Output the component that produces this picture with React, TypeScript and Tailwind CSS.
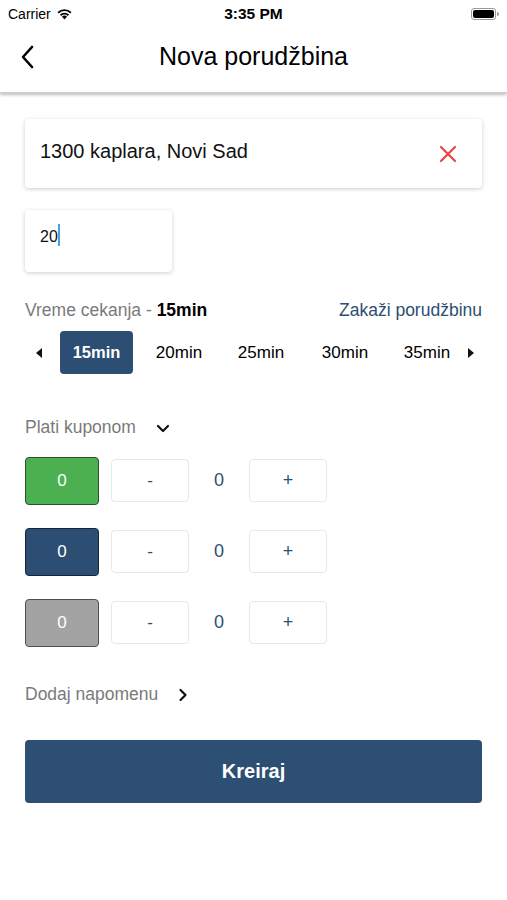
import React from "react";

const font = { fontFamily: '"Helvetica Neue", "Liberation Sans", Arial, sans-serif' };

function CouponRow({ color }: { color: string }) {
  return (
    <div className="flex items-center h-[48px]">
      <div className={`w-[74px] h-[48px] rounded-[4px] border flex items-center justify-center text-white text-[17px] ${color}`}>0</div>
      <div className="ml-[12px] w-[78px] h-[43px] rounded-[4px] border border-[#e8e8e8] bg-white flex items-center justify-center text-[#2c4e72] text-[17px]">-</div>
      <div className="w-[60px] text-center text-[#2c4e72] text-[18px]">0</div>
      <div className="w-[78px] h-[43px] rounded-[4px] border border-[#e8e8e8] bg-white flex items-center justify-center text-[#2c4e72] text-[18px]">+</div>
    </div>
  );
}

export default function App() {
  return (
    <div className="w-[507px] h-[900px] bg-white relative overflow-hidden" style={font}>
      {/* status bar */}
      <div className="h-[28px] flex items-center justify-between px-[8px] text-black">
        <div className="flex items-center gap-[5px] text-[14px]">
          <span>Carrier</span>
          <svg width="17" height="12" viewBox="0 0 17 12">
            <path d="M8.5 11.5 L5.9 8.6 A3.8 3.8 0 0 1 11.1 8.6 Z" fill="#000" />
            <path d="M3.9 6.5 A6.6 6.6 0 0 1 13.1 6.5 L11.8 7.9 A4.7 4.7 0 0 0 5.2 7.9 Z" fill="#000" />
            <path d="M1.5 4 A10 10 0 0 1 15.5 4 L14.2 5.4 A8 8 0 0 0 2.8 5.4 Z" fill="#000" />
          </svg>
        </div>
        <div className="absolute left-0 right-0 text-center text-[15.5px] font-semibold pointer-events-none">3:35 PM</div>
        <div className="flex items-center">
          <div className="w-[25px] h-[12px] rounded-[3px] border border-[#999] p-[1px]">
            <div className="w-full h-full bg-black rounded-[2px]" />
          </div>
          <div className="w-[2px] h-[4px] bg-[#999] rounded-r-sm ml-[1px]" />
        </div>
      </div>

      {/* header */}
      <div className="h-[65px] relative flex items-center justify-center shadow-[0_2px_3px_rgba(0,0,0,0.25)] border-b border-[#cfcfcf]">
        <svg className="absolute left-[19px] top-[16px]" width="16" height="26" viewBox="0 0 16 26">
          <path d="M13 3 L4 13 L13 23" stroke="#000" strokeWidth="2.6" fill="none" strokeLinecap="round" strokeLinejoin="round" />
        </svg>
        <div className="text-[25px] text-black mt-[-7px]">Nova porudžbina</div>
      </div>

      {/* content */}
      <div className="px-[25px] pt-[26px]">
        <div className="h-[69px] rounded-[4px] bg-white shadow-[0_1px_4px_rgba(0,0,0,0.2)] flex items-start justify-between pl-[15px] pr-[25px] pt-[17px]">
          <span className="text-[20px] text-[#111]">1300 kaplara, Novi Sad</span>
          <svg className="mt-[9px]" width="18" height="18" viewBox="0 0 18 18">
            <path d="M2 2 L16 16 M16 2 L2 16" stroke="#e8473c" strokeWidth="2.2" strokeLinecap="round" />
          </svg>
        </div>

        <div className="mt-[22px] w-[147px] h-[62px] rounded-[4px] bg-white shadow-[0_1px_4px_rgba(0,0,0,0.2)] pl-[15px] pt-[15px] flex items-start">
          <span className="text-[16px] text-[#111]">20</span>
          <span className="w-[2px] h-[22px] bg-[#4a9fe8] mt-[-1px]" />
        </div>

        <div className="mt-[25px] flex items-center justify-between text-[17.5px]">
          <span className="text-[#7a7a7a]">
            Vreme cekanja - <span className="text-black font-bold">15min</span>
          </span>
          <span className="text-[#2c4e72]">Zakaži porudžbinu</span>
        </div>

        <div className="mt-[8px] flex items-center h-[43px] text-[17px]">
          <svg className="ml-[11px]" width="7" height="10" viewBox="0 0 7 10">
            <path d="M6 0 L0 5 L6 10 Z" fill="#111" />
          </svg>
          <div className="ml-[17px] w-[73px] h-[43px] rounded-[4px] bg-[#2c4e72] text-white text-[16.5px] font-semibold flex items-center justify-center">15min</div>
          <div className="w-[92px] text-center text-black font-medium">20min</div>
          <div className="w-[72px] text-center text-black font-medium">25min</div>
          <div className="w-[96px] text-center text-black font-medium">30min</div>
          <div className="w-[68px] text-center text-black font-medium">35min</div>
          <svg className="ml-[6px]" width="7" height="10" viewBox="0 0 7 10">
            <path d="M1 0 L7 5 L1 10 Z" fill="#111" />
          </svg>
        </div>

        <div className="mt-[40px] flex items-center text-[17.5px] text-[#7a7a7a]">
          <span>Plati kuponom</span>
          <svg className="ml-[20px] mt-[3px]" width="14" height="10" viewBox="0 0 14 10">
            <path d="M2 2 L7 7 L12 2" stroke="#111" strokeWidth="2.2" fill="none" strokeLinecap="round" strokeLinejoin="round" />
          </svg>
        </div>

        <div className="mt-[16px] flex flex-col gap-[23px]">
          <CouponRow color="bg-[#4caf50] border-[#2f4f2f]" />
          <CouponRow color="bg-[#2c4e72] border-[#14243a]" />
          <CouponRow color="bg-[#a3a3a3] border-[#505050]" />
        </div>

        <div className="mt-[34px] flex items-center text-[17.5px] text-[#7a7a7a]">
          <span>Dodaj napomenu</span>
          <svg className="ml-[20px] mt-[3px]" width="10" height="14" viewBox="0 0 10 14">
            <path d="M2.5 2 L7.5 7 L2.5 12" stroke="#111" strokeWidth="2.2" fill="none" strokeLinecap="round" strokeLinejoin="round" />
          </svg>
        </div>

        <div className="mt-[33px] h-[63px] rounded-[4px] bg-[#2c4f73] text-white text-[20px] font-semibold flex items-center justify-center">
          Kreiraj
        </div>
      </div>
    </div>
  );
}
